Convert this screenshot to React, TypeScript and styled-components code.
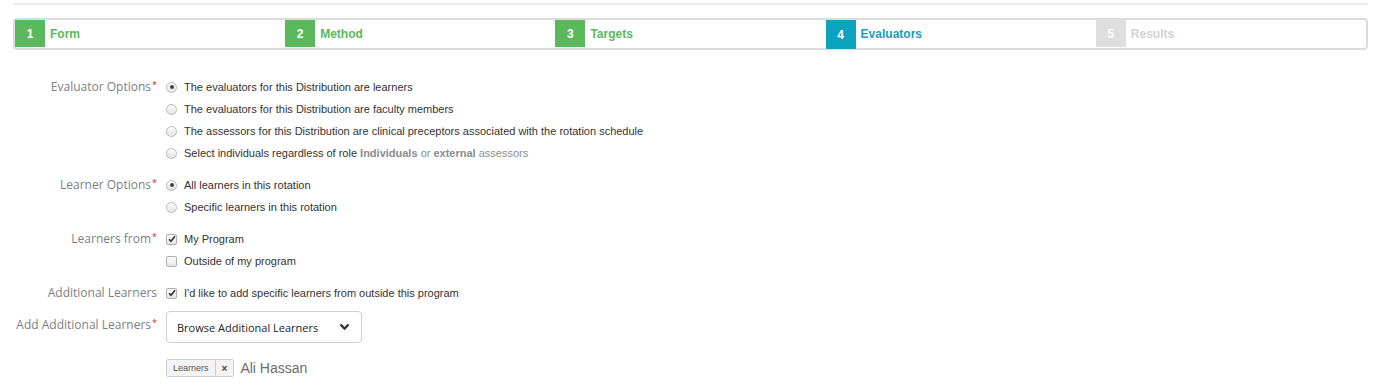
import styled, { createGlobalStyle } from "styled-components";
import { type FC, type ReactNode } from "react";

//global reset
const GlobalStyle = createGlobalStyle`
  body {
    margin: 0;
    background: #fff;
    font-family: "Liberation Sans", Arial, sans-serif;
  }
`;

//type declarations.
type StepState = "done" | "active" | "pending";

interface StepProps {
  num: number;
  title: string;
  state: StepState;
}

interface FieldRowProps {
  label: string;
  required?: boolean;
  children: ReactNode;
}

interface ChoiceProps {
  kind: "radio" | "checkbox";
  checked?: boolean;
  children: ReactNode;
}

const stepColors: Record<StepState, { box: string; text: string }> = {
  done: { box: "#5cb85c", text: "#5cb85c" },
  active: { box: "#0ca3c1", text: "#1b9cbd" },
  pending: { box: "#dedede", text: "#d2d2d2" },
};

// =====================Wizard steps==================================>
const Page = styled.div`
  padding: 3px 10px 20px 13px;
`;

const TopRule = styled.div`
  height: 2px;
  background: #ececec;
`;

const StepList = styled.ul`
  list-style: none;
  margin: 13px 0 0;
  padding: 0;
  display: flex;
  height: 28px;
  border: 2px solid #dcdcdc;
  border-radius: 4px;
`;

const StepItem = styled.li`
  flex: 1;
  display: flex;
  align-items: center;
  gap: 5px;
`;

const StepNumber = styled.span<{ $state: StepState }>`
  width: 30px;
  height: ${(p) => (p.$state === "active" ? "29px" : "27px")};
  align-self: flex-start;
  display: flex;
  align-items: center;
  justify-content: center;
  background: ${(p) => stepColors[p.$state].box};
  color: #fff;
  font-size: 12px;
  font-weight: bold;
`;

const StepTitle = styled.span<{ $state: StepState }>`
  color: ${(p) => stepColors[p.$state].text};
  font-size: 12px;
  font-weight: bold;
`;

const Step: FC<StepProps> = ({ num, title, state }) => (
  <StepItem>
    <StepNumber $state={state}>{num}</StepNumber>
    <StepTitle $state={state}>{title}</StepTitle>
  </StepItem>
);

// =====================Form rows==================================>
const Form = styled.div`
  margin-top: 26px;
  display: flex;
  flex-direction: column;
  gap: 10px;
`;

const Row = styled.div`
  display: grid;
  grid-template-columns: 144px 1fr;
  column-gap: 9px;
  align-items: start;
`;

const Label = styled.div`
  font-family: "Open Sans", sans-serif;
  font-size: 12px;
  color: #7b7f85;
  text-align: right;
  line-height: 22px;
  white-space: nowrap;
`;

const Required = styled.sup`
  color: #c9302c;
  font-size: 9px;
  margin-left: 1px;
  vertical-align: 3px;
  line-height: 0;
`;

const Choices = styled.div`
  display: flex;
  flex-direction: column;
`;

const ChoiceLabel = styled.label`
  display: flex;
  align-items: center;
  gap: 7px;
  height: 22px;
  font-size: 11px;
  color: #333;
`;

const RadioMark = styled.span<{ $checked: boolean }>`
  width: 11px;
  height: 11px;
  box-sizing: border-box;
  border-radius: 50%;
  border: 1px solid #b8b8b8;
  background: linear-gradient(#fdfdfd, #e4e4e4);
  display: flex;
  align-items: center;
  justify-content: center;
  &::after {
    content: "";
    width: 4px;
    height: 4px;
    border-radius: 50%;
    background: ${(p) => (p.$checked ? "#444" : "transparent")};
  }
`;

const CheckMark = styled.span`
  width: 11px;
  height: 11px;
  box-sizing: border-box;
  border-radius: 2px;
  border: 1px solid #b0b0b0;
  background: linear-gradient(#fdfdfd, #e6e6e6);
  display: flex;
  align-items: center;
  justify-content: center;
`;

const Muted = styled.span`
  color: #8a8d91;
`;

const MutedBold = styled.b`
  color: #8a8d91;
`;

const Choice: FC<ChoiceProps> = ({ kind, checked = false, children }) => (
  <ChoiceLabel>
    {kind === "radio" ? (
      <RadioMark $checked={checked} />
    ) : (
      <CheckMark>
        {checked && (
          <svg width="8" height="8" viewBox="0 0 8 8">
            <path d="M1 4.2 L3 6.3 L7 1.2" fill="none" stroke="#333" strokeWidth="1.6" />
          </svg>
        )}
      </CheckMark>
    )}
    <span>{children}</span>
  </ChoiceLabel>
);

const FieldRow: FC<FieldRowProps> = ({ label, required, children }) => (
  <Row>
    <Label>
      {label}
      {required && <Required>*</Required>}
    </Label>
    {children}
  </Row>
);

// =====================Select + tags==================================>
const SelectButton = styled.button`
  width: 196px;
  height: 32px;
  display: flex;
  align-items: center;
  justify-content: space-between;
  padding: 0 11px 0 10px;
  margin-top: -3px;
  border: 1px solid #d0d0d0;
  border-radius: 4px;
  background: #fff;
  font-family: "Open Sans", sans-serif;
  font-size: 11px;
  color: #222;
`;

const TagLine = styled.div`
  display: flex;
  align-items: center;
  gap: 6px;
  margin-top: 16px;
`;

const Tag = styled.span`
  display: inline-flex;
  height: 18px;
  box-sizing: border-box;
  border: 1px solid #ccc;
  border-radius: 2px;
  background: #f4f4f4;
  font-size: 9px;
  color: #555;
  & > span {
    display: flex;
    align-items: center;
    padding: 0 6px;
  }
  & > span + span {
    border-left: 1px solid #ccc;
    font-weight: bold;
    font-size: 10px;
    color: #444;
  }
`;

const PersonName = styled.span`
  font-size: 14px;
  color: #6d6d6d;
`;

// ================================================================>
export default function App() {
  return (
    <Page>
      <GlobalStyle />
      <TopRule />
      <StepList>
        <Step num={1} title="Form" state="done" />
        <Step num={2} title="Method" state="done" />
        <Step num={3} title="Targets" state="done" />
        <Step num={4} title="Evaluators" state="active" />
        <Step num={5} title="Results" state="pending" />
      </StepList>

      <Form>
        <FieldRow label="Evaluator Options" required>
          <Choices>
            <Choice kind="radio" checked>
              The evaluators for this Distribution are learners
            </Choice>
            <Choice kind="radio">The evaluators for this Distribution are faculty members</Choice>
            <Choice kind="radio">
              The assessors for this Distribution are clinical preceptors associated with the rotation schedule
            </Choice>
            <Choice kind="radio">
              Select individuals regardless of role <MutedBold>Individuals</MutedBold> <Muted>or</Muted>{" "}
              <MutedBold>external</MutedBold> <Muted>assessors</Muted>
            </Choice>
          </Choices>
        </FieldRow>

        <FieldRow label="Learner Options" required>
          <Choices>
            <Choice kind="radio" checked>
              All learners in this rotation
            </Choice>
            <Choice kind="radio">Specific learners in this rotation</Choice>
          </Choices>
        </FieldRow>

        <FieldRow label="Learners from" required>
          <Choices>
            <Choice kind="checkbox" checked>
              My Program
            </Choice>
            <Choice kind="checkbox">Outside of my program</Choice>
          </Choices>
        </FieldRow>

        <FieldRow label="Additional Learners">
          <Choices>
            <Choice kind="checkbox" checked>
              I'd like to add specific learners from outside this program
            </Choice>
          </Choices>
        </FieldRow>

        <FieldRow label="Add Additional Learners" required>
          <div>
            <SelectButton>
              Browse Additional Learners
              <svg width="11" height="8" viewBox="0 0 11 8">
                <path d="M1.5 1.5 L5.5 5.5 L9.5 1.5" fill="none" stroke="#333" strokeWidth="2.4" />
              </svg>
            </SelectButton>
            <TagLine>
              <Tag>
                <span>Learners</span>
                <span>×</span>
              </Tag>
              <PersonName>Ali Hassan</PersonName>
            </TagLine>
          </div>
        </FieldRow>
      </Form>
    </Page>
  );
}
